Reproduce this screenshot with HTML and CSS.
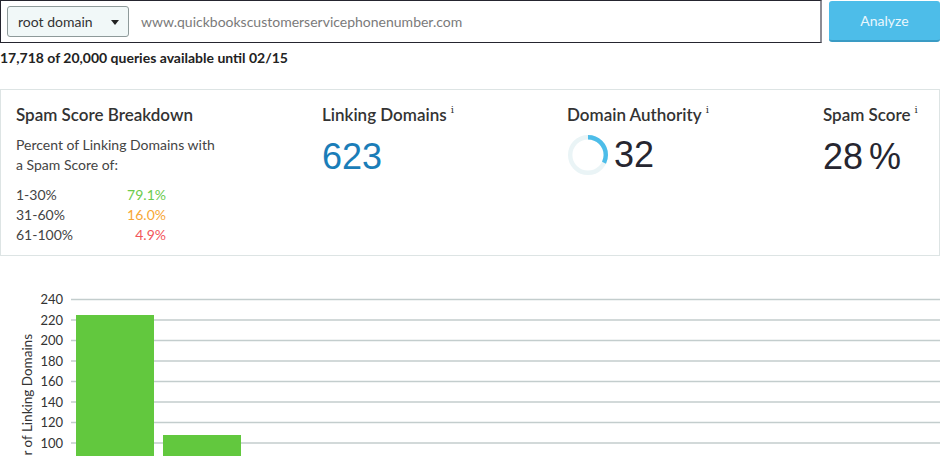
FILE: index.html
```html
<!DOCTYPE html>
<html>
<head>
<meta charset="utf-8">
<link rel="stylesheet" href="styles.css">
</head>
<body>
<div class="search-row">
  <div class="search-box">
    <div class="scope">root domain <span class="caret"></span></div>
    <div class="url">www.quickbookscustomerservicephonenumber.com</div>
  </div>
  <div class="analyze">Analyze</div>
</div>
<div class="quota">17,718 of 20,000 queries available until 02/15</div>
<div class="card">
  <div class="col">
    <div class="title">Spam Score Breakdown</div>
    <div class="desc">Percent of Linking Domains with<br>a Spam Score of:</div>
    <div class="rows">
      <span>1-30%</span><span class="v green">79.1%</span>
      <span>31-60%</span><span class="v orange">16.0%</span>
      <span>61-100%</span><span class="v red">4.9%</span>
    </div>
  </div>
  <div class="col">
    <div class="title">Linking Domains<sup class="info">i</sup></div>
    <div class="big blue">623</div>
  </div>
  <div class="col">
    <div class="title">Domain Authority<sup class="info">i</sup></div>
    <div class="da">
      <svg class="donut" width="40" height="40" viewBox="0 0 40 40">
        <circle cx="20" cy="20" r="17.8" fill="none" stroke="#eaf4f6" stroke-width="4.4"/>
        <circle cx="20" cy="20" r="17.8" fill="none" stroke="#4dbde9" stroke-width="4.4" stroke-dasharray="35.8 112" transform="rotate(-90 20 20)"/>
      </svg>
      <div class="big">32</div>
    </div>
  </div>
  <div class="col">
    <div class="title">Spam Score<sup class="info">i</sup></div>
    <div class="big">28<span class="pct">%</span></div>
  </div>
</div>
<svg class="chart" width="940" height="200" viewBox="0 0 940 200">
  <g class="grid">
    <line x1="71" x2="940" y1="43.5" y2="43.5"/>
    <line x1="71" x2="940" y1="64" y2="64"/>
    <line x1="71" x2="940" y1="84.5" y2="84.5"/>
    <line x1="71" x2="940" y1="105" y2="105"/>
    <line x1="71" x2="940" y1="125.5" y2="125.5"/>
    <line x1="71" x2="940" y1="146" y2="146"/>
    <line x1="71" x2="940" y1="166.5" y2="166.5"/>
    <line x1="71" x2="940" y1="187" y2="187"/>
  </g>
  <g class="labels">
    <text x="63" y="48">240</text>
    <text x="63" y="68.5">220</text>
    <text x="63" y="89">200</text>
    <text x="63" y="109.5">180</text>
    <text x="63" y="130">160</text>
    <text x="63" y="150.5">140</text>
    <text x="63" y="171">120</text>
    <text x="63" y="191.5">100</text>
  </g>
  <text class="axis-title" transform="rotate(-90)" x="-78" y="32">Number of Linking Domains</text>
  <rect class="bar" x="76" y="59" width="78" height="141"/>
  <rect class="bar" x="163" y="179" width="78" height="21"/>
</svg>
</body>
</html>
```

FILE: styles.css
```css
html, body {
  margin: 0;
  padding: 0;
  background: #fff;
}
body {
  font-family: Lato, "Open Sans", sans-serif;
  color: #333;
  width: 940px;
  overflow: hidden;
}
.search-row {
  display: flex;
  gap: 7px;
  height: 43px;
}
.search-box {
  box-sizing: border-box;
  flex: 0 0 822px;
  height: 43px;
  border: 1px solid #25252f;
  border-right: 2px solid #8d8d95;
  display: flex;
  align-items: center;
  padding-left: 6px;
}
.scope {
  box-sizing: border-box;
  width: 122px;
  height: 31px;
  background: #f1f8f8;
  border: 1px solid #8e9a9a;
  border-radius: 3px;
  font-size: 14px;
  color: #333;
  display: flex;
  align-items: center;
  padding-left: 10px;
}
.caret {
  width: 0;
  height: 0;
  border-left: 4px solid transparent;
  border-right: 4px solid transparent;
  border-top: 5px solid #222;
  margin-left: 18px;
  margin-top: 1px;
}
.url {
  margin-left: 12px;
  font-size: 14px;
  color: #7a7a7a;
}
.analyze {
  box-sizing: border-box;
  width: 111px;
  height: 41px;
  margin-top: 1px;
  background: #4dbde9;
  border-bottom: 2px solid #3a9bc4;
  border-radius: 3px;
  color: #eaf7fd;
  font-size: 14px;
  display: flex;
  align-items: center;
  justify-content: center;
}
.quota {
  margin-top: 7px;
  font-size: 14px;
  line-height: 16px;
  font-weight: 700;
  color: #222;
}
.card {
  box-sizing: border-box;
  margin-top: 23px;
  width: 940px;
  height: 167px;
  border: 1px solid #dde4e4;
  padding: 15px 0 0 15px;
  display: grid;
  grid-template-columns: 306px 245px 256px 1fr;
}
.title {
  font-size: 17px;
  line-height: 20px;
  font-weight: 600;
  color: #333;
}
.info {
  font-family: "DejaVu Serif", serif;
  font-size: 10px;
  font-weight: 400;
  color: #333;
  margin-left: 4px;
  vertical-align: 8px;
  line-height: 0;
}
.desc {
  margin-top: 10px;
  font-size: 14px;
  line-height: 20px;
  color: #444;
}
.rows {
  margin-top: 10px;
  width: 150px;
  display: grid;
  grid-template-columns: 1fr auto;
  font-size: 14px;
  line-height: 20px;
  color: #444;
}
.v { text-align: right; }
.green { color: #6ccb4d; }
.orange { color: #f7a734; }
.red { color: #f2565a; }
.big {
  margin-top: 12px;
  font-family: "Liberation Sans", Arial, sans-serif;
  font-size: 36px;
  line-height: 40px;
  color: #262630;
}
.pct { margin-left: 6px; }
.big.blue { color: #1a7db8; }
.da {
  display: flex;
  align-items: center;
  gap: 6px;
  margin-top: 10px;
  margin-left: 1px;
}
.da .big { margin-top: 0; }
.donut { display: block; }
.chart {
  display: block;
}
.grid line {
  stroke: #c3cdcd;
  stroke-width: 1.3;
}
.labels text {
  font-family: Lato, sans-serif;
  font-size: 13px;
  fill: #333;
  text-anchor: end;
}
.axis-title {
  font-family: Lato, sans-serif;
  font-size: 13.5px;
  fill: #333;
  text-anchor: end;
}
.bar { fill: #62c83e; }
```
